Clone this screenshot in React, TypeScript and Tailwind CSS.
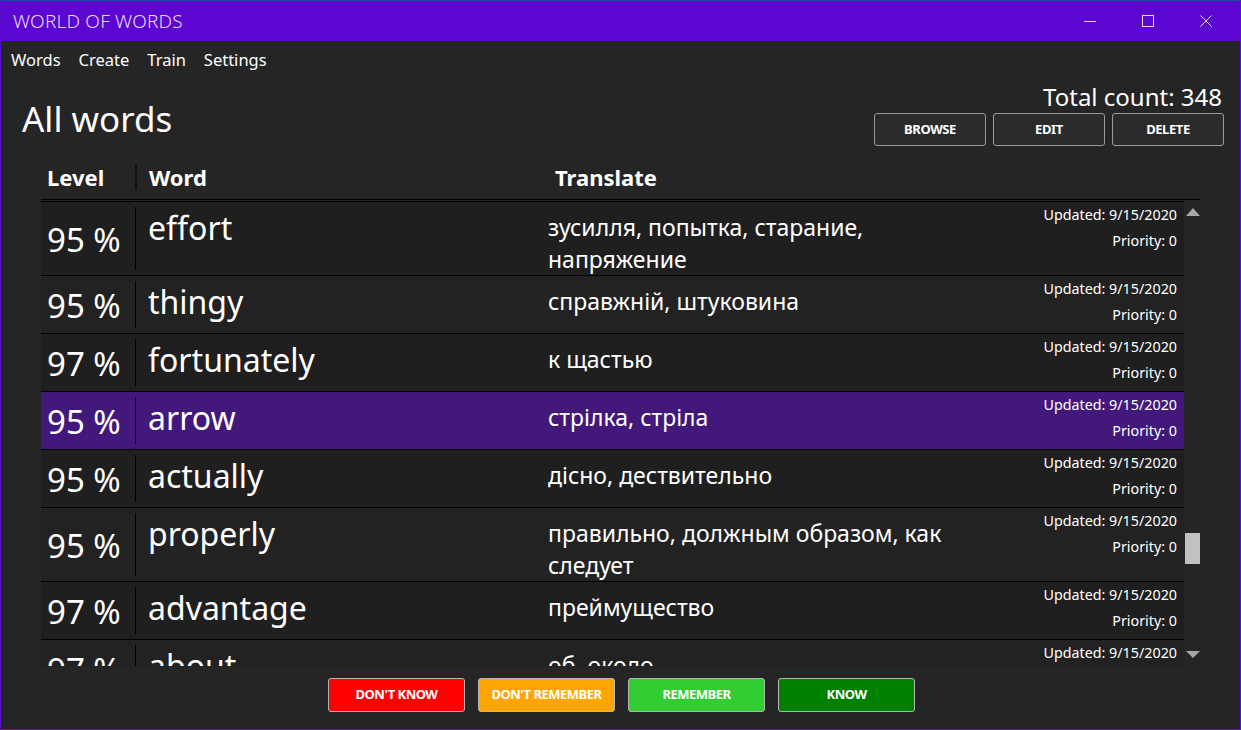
import React, { useState } from 'react';

interface WordRow {
  id: number;
  level: number;
  word: string;
  translate: string;
  updated: string;
  priority: number;
}

const words: WordRow[] = [
  { id: 1, level: 95, word: 'effort', translate: 'зусилля, попытка, старание, напряжение', updated: '9/15/2020', priority: 0 },
  { id: 2, level: 95, word: 'thingy', translate: 'справжній, штуковина', updated: '9/15/2020', priority: 0 },
  { id: 3, level: 97, word: 'fortunately', translate: 'к щастью', updated: '9/15/2020', priority: 0 },
  { id: 4, level: 95, word: 'arrow', translate: 'стрілка, стріла', updated: '9/15/2020', priority: 0 },
  { id: 5, level: 95, word: 'actually', translate: 'дісно, дествительно', updated: '9/15/2020', priority: 0 },
  { id: 6, level: 95, word: 'properly', translate: 'правильно, должным образом, как следует', updated: '9/15/2020', priority: 0 },
  { id: 7, level: 97, word: 'advantage', translate: 'преймущество', updated: '9/15/2020', priority: 0 },
  { id: 8, level: 97, word: 'about', translate: 'об, около', updated: '9/15/2020', priority: 0 },
];

const font = { fontFamily: '"Noto Sans", "Open Sans", sans-serif' };

export default function App() {
  const [selected, setSelected] = useState(4);

  return (
    <div className="w-[1241px] h-[730px] flex flex-col bg-[#252525] border-x border-b border-[#5a0fd0] text-white overflow-hidden" style={font}>
      {/* Title bar */}
      <div className="h-[1px] bg-[#17508e]" />
      <div className="h-[40px] shrink-0 bg-[#5c07d1] flex items-center pl-[12px] text-[#e6daf7]">
        <span className="text-[19px] font-light tracking-[0.2px]">WORLD OF WORDS</span>
        <div className="ml-auto flex items-center h-full">
          <div className="w-[58px] h-full flex items-center justify-center">
            <div className="w-[12px] h-px bg-[#e6daf7]" />
          </div>
          <div className="w-[58px] h-full flex items-center justify-center">
            <div className="w-[12px] h-[12px] border border-[#e6daf7]" />
          </div>
          <div className="w-[58px] h-full flex items-center justify-center mr-[5px]">
            <svg width="12" height="12" viewBox="0 0 12 12">
              <path d="M0.5 0.5 L11.5 11.5 M11.5 0.5 L0.5 11.5" stroke="#e6daf7" strokeWidth="1" />
            </svg>
          </div>
        </div>
      </div>

      {/* Menu */}
      <div className="flex items-center h-[38px] pl-[10px] gap-[18px] text-[16.5px] text-white">
        <span>Words</span>
        <span>Create</span>
        <span>Train</span>
        <span>Settings</span>
      </div>

      {/* Header */}
      <div className="flex justify-between pl-[21px] pr-[17px]">
        <h1 className="text-[35px] font-normal mt-[19px] leading-[42px]">All words</h1>
        <div className="flex flex-col items-end mt-[1px]">
          <div className="text-[24px] leading-[34px] mr-[1px]">Total count: 348</div>
          <div className="flex gap-[7px] -mt-[1px] mr-[-1px]">
            {['BROWSE', 'EDIT', 'DELETE'].map((b) => (
              <button key={b} className="w-[112px] h-[33px] rounded-[3px] border border-[#9a9a9a] bg-[#2b2b2b] text-[13px] font-bold tracking-[-0.4px] text-white">
                {b}
              </button>
            ))}
          </div>
        </div>
      </div>

      {/* Table */}
      <div className="mx-[40px] mt-[15px] flex flex-col">
        <div className="flex items-center h-[36px] pb-[4px] text-[22px] font-bold">
          <div className="w-[94px] pl-[6px]">Level</div>
          <div className="w-[2px] h-[26px] bg-[#111]" />
          <div className="w-[418px] pl-[12px]">Word</div>
          <div>Translate</div>
        </div>
        <div className="h-[2px] mt-[2px] border-t border-black" />
        <div className="flex">
          <div className="flex-1 h-[465px] overflow-hidden flex flex-col">
            {words.map((w, i) => (
              <div
                key={w.id}
                onClick={() => setSelected(w.id)}
                className={
                  'flex shrink-0 border-t border-black min-h-[58px] ' +
                  (w.id === selected ? 'bg-[#43187b]' : i % 2 === 0 ? 'bg-[#1f1f1f]' : 'bg-[#222222]')
                }
              >
                <div className="w-[94px] flex items-center pl-[6px] pt-[3px] text-[33px]">{w.level} %</div>
                <div className="w-px bg-black my-[5px]" />
                <div className="w-[412px] pl-[12px] pt-[6px] text-[32px] leading-[40px]">{w.word}</div>
                <div className="w-[415px] pt-[9px] text-[23px] leading-[32px]">{w.translate}</div>
                <div className="flex-1 flex flex-col items-end pr-[7px] text-[14.3px] leading-[26px]">
                  <span>Updated: {w.updated}</span>
                  <span>Priority: {w.priority}</span>
                </div>
              </div>
            ))}
          </div>
          {/* Scrollbar */}
          <div className="w-[16px] h-[465px] relative">
            <svg className="absolute left-[2px] top-[7px]" width="14" height="8" viewBox="0 0 14 8">
              <path d="M7 0 L14 8 L0 8 Z" fill="#a6a6a6" />
            </svg>
            <div className="absolute left-[1px] top-[332px] w-[15px] h-[31px] bg-[#c1c1c1]" />
            <svg className="absolute left-[2px] top-[450px]" width="14" height="7" viewBox="0 0 14 7">
              <path d="M0 0 L14 0 L7 7 Z" fill="#a6a6a6" />
            </svg>
          </div>
        </div>
      </div>

      {/* Bottom buttons */}
      <div className="flex justify-center gap-[13px] mt-[12px] pl-[2px]">
        <button className="w-[137px] h-[34px] rounded-[3px] border border-[#b5b5b5] bg-[#ff0000] text-[13px] font-bold tracking-[-0.5px]">DON'T KNOW</button>
        <button className="w-[137px] h-[34px] rounded-[3px] border border-[#b5b5b5] bg-[#ffa500] text-[13px] font-bold tracking-[-0.5px]">DON'T REMEMBER</button>
        <button className="w-[137px] h-[34px] rounded-[3px] border border-[#b5b5b5] bg-[#32cd32] text-[13px] font-bold tracking-[-0.5px]">REMEMBER</button>
        <button className="w-[137px] h-[34px] rounded-[3px] border border-[#b5b5b5] bg-[#008000] text-[13px] font-bold tracking-[-0.5px]">KNOW</button>
      </div>
    </div>
  );
}
